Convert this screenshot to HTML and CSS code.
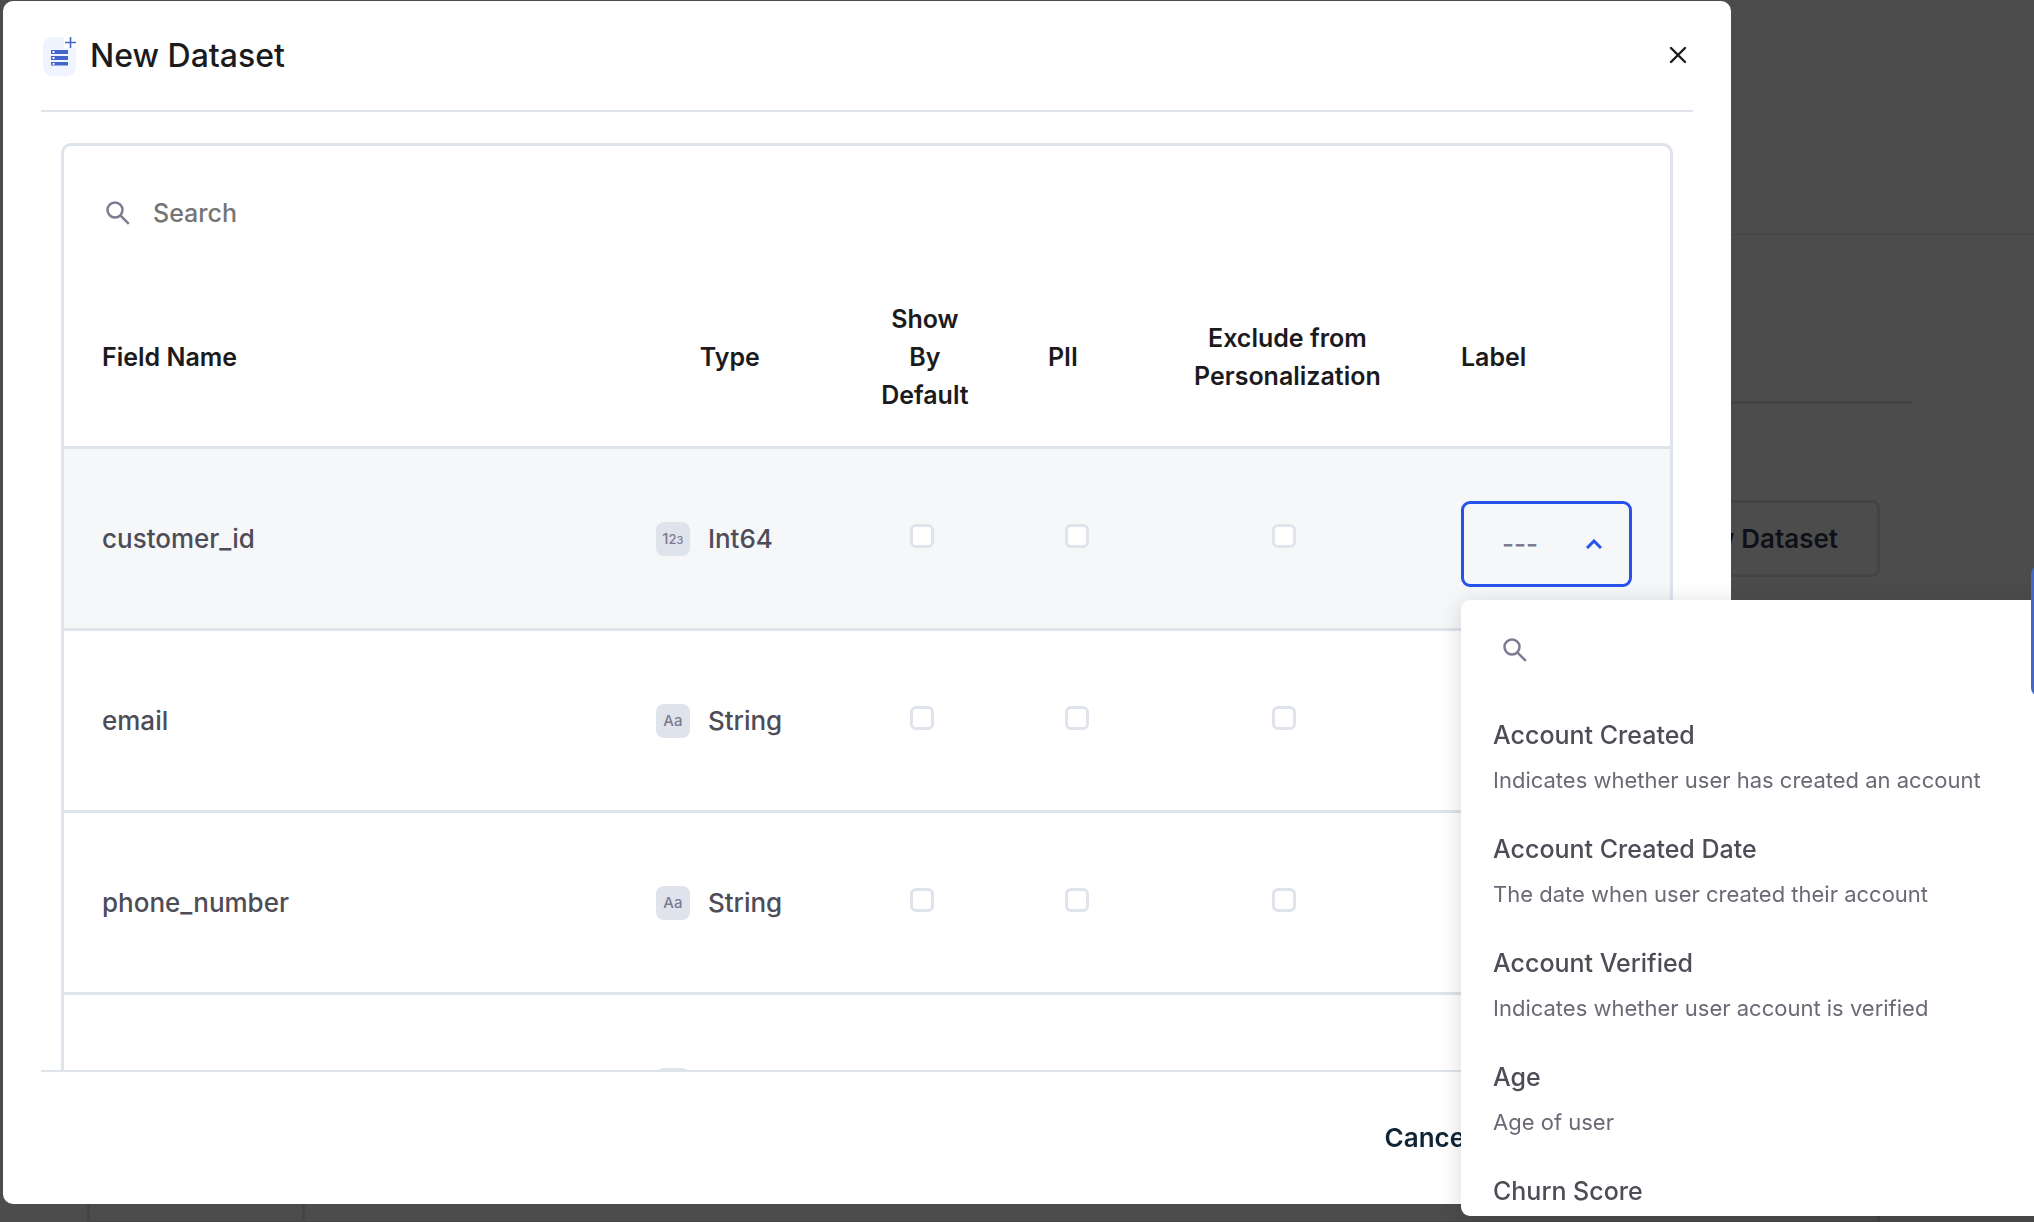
FILE: index.html
```html
<!DOCTYPE html>
<html lang="en">
<head>
<meta charset="utf-8">
<title>New Dataset</title>
<link rel="stylesheet" href="styles.css">
</head>
<body>
<div class="page">
  <header class="page-header"></header>
  <div class="page-toolbar"></div>
  <div class="page-actions">
    <button class="page-button" type="button">New Dataset</button>
  </div>
  <div class="page-panel"><div class="page-panel-side"></div></div>
</div>

<div class="backdrop">
  <section class="dialog" role="dialog" aria-modal="true" aria-labelledby="dialog-title">
    <header class="dialog-header">
      <svg class="dialog-icon" viewBox="0 0 36 42" aria-hidden="true">
        <rect x="1" y="2" width="33" height="39" rx="9" fill="#f0f4ff"/>
        <path d="M22 0h14v13H22z" fill="#fff"/>
        <path d="M28.500 2v11M23 7.500h11" stroke="#4367c8" stroke-width="1.600"/>
        <path d="M9 15h17v4H9zM9 21h17v4H9zM9 27h17v3.500H9z" fill="#4367c8"/>
        <path d="M10.500 16h2v2h-2zM10.500 22h2v2h-2zM10.500 28h2v1.800h-2z" fill="#fff"/>
      </svg>
      <h1 class="dialog-title" id="dialog-title">New Dataset</h1>
      <button class="close-button" type="button" aria-label="Close">
        <svg viewBox="0 0 30 30" aria-hidden="true"><path d="M8 7l14 14M22 7L8 21" fill="none" stroke="#1b1b1d" stroke-width="2.400" stroke-linecap="round"/></svg>
      </button>
    </header>

    <div class="dialog-body">
      <div class="fields-card">
        <label class="search">
          <svg class="search-icon" viewBox="0 0 24 24" aria-hidden="true"><circle cx="9" cy="9" r="7.500"/><path d="M14.300 14.300l8.500 8.500"/></svg>
          <input class="search-input" type="text" placeholder="Search" aria-label="Search">
        </label>
        <table class="fields">
          <colgroup>
            <col><col class="col-type"><col class="col-show"><col class="col-pii"><col class="col-exclude"><col class="col-label">
          </colgroup>
          <thead>
            <tr>
              <th class="name" scope="col">Field Name</th>
              <th scope="col">Type</th>
              <th scope="col">Show<br>By<br>Default</th>
              <th class="pii" scope="col">PII</th>
              <th scope="col">Exclude from<br>Personalization</th>
              <th class="label-head" scope="col">Label</th>
            </tr>
          </thead>
          <tbody>
            <tr class="active">
              <td class="name">customer_id</td>
              <td><div class="type"><span class="badge"><span>1</span><span class="digit-two">2</span><span class="digit-three">3</span></span>Int64</div></td>
              <td class="check"><input type="checkbox" aria-label="Show customer_id by default"></td>
              <td class="check"><input type="checkbox" aria-label="customer_id is PII"></td>
              <td class="check"><input type="checkbox" aria-label="Exclude customer_id from personalization"></td>
              <td class="label-cell">
                <div class="select-box">
                  <select class="select" aria-label="Label for customer_id"><option>---</option></select>
                  <svg class="chevron" viewBox="0 0 16 10" aria-hidden="true"><path d="M1 9l7-7 7 7"/></svg>
                </div>
              </td>
            </tr>
            <tr>
              <td class="name">email</td>
              <td><div class="type"><span class="badge">Aa</span>String</div></td>
              <td class="check"><input type="checkbox" aria-label="Show email by default"></td>
              <td class="check"><input type="checkbox" aria-label="email is PII"></td>
              <td class="check"><input type="checkbox" aria-label="Exclude email from personalization"></td>
              <td></td>
            </tr>
            <tr>
              <td class="name">phone_number</td>
              <td><div class="type"><span class="badge">Aa</span>String</div></td>
              <td class="check"><input type="checkbox" aria-label="Show phone_number by default"></td>
              <td class="check"><input type="checkbox" aria-label="phone_number is PII"></td>
              <td class="check"><input type="checkbox" aria-label="Exclude phone_number from personalization"></td>
              <td></td>
            </tr>
            <tr>
              <td class="name"></td>
              <td><div class="type"><span class="badge"></span></div></td>
              <td></td>
              <td></td>
              <td></td>
              <td></td>
            </tr>
          </tbody>
        </table>
      </div>
    </div>

    <footer class="dialog-footer">
      <button class="cancel-button" type="button">Cancel</button>
    </footer>
  </section>
</div>

<div class="menu">
  <label class="menu-search">
    <svg class="search-icon" viewBox="0 0 24 24" aria-hidden="true"><circle cx="9" cy="9" r="7.500"/><path d="M14.300 14.300l8.500 8.500"/></svg>
    <input class="search-input" type="text" aria-label="Search labels">
  </label>
  <ul class="menu-list">
    <li class="menu-item"><span class="item-title">Account Created</span><span class="item-text">Indicates whether user has created an account</span></li>
    <li class="menu-item"><span class="item-title">Account Created Date</span><span class="item-text">The date when user created their account</span></li>
    <li class="menu-item"><span class="item-title">Account Verified</span><span class="item-text">Indicates whether user account is verified</span></li>
    <li class="menu-item"><span class="item-title">Age</span><span class="item-text">Age of user</span></li>
    <li class="menu-item"><span class="item-title">Churn Score</span></li>
  </ul>
</div>

<button class="side-tab" type="button" aria-label="Help"></button>
</body>
</html>
```
FILE: styles.css
```css
:root {
  --line: #dfe3ec;
  --ink: #1b1b1d;
  --text: #4d4c57;
  --muted: #7d7a92;
  --blue: #2853eb;
}

* {
  box-sizing: border-box;
}

body {
  margin: 0;
  overflow: hidden;
  background: #fff;
  color: var(--text);
  font-family: Inter, "Liberation Sans", sans-serif;
  font-size: 26px;
  font-weight: 450;
  line-height: 38px;
}

button,
input,
select {
  font: inherit;
  color: inherit;
}

button {
  padding: 0;
  border: 0;
  background: none;
}

/* Page behind the dialog */

.page {
  display: flex;
  flex-direction: column;
  height: 100vh;
}

.page-header {
  height: 235px;
  border-bottom: 1px solid var(--line);
}

.page-toolbar {
  height: 169px;
  margin: 0 122px 0 88px;
  border-bottom: 3px solid var(--line);
}

.page-actions {
  display: flex;
  justify-content: flex-end;
  padding: 96px 154px 48px 88px;
}

.page-button {
  height: 77px;
  padding: 0 39px;
  border: 3px solid var(--line);
  border-radius: 8px;
  color: #363a50;
  font-weight: 600;
}

.page-panel {
  flex: 1;
  display: flex;
  margin: 0 154px 0 87px;
  border: 3px solid var(--line);
  border-bottom-width: 1px;
}

.page-panel-side {
  width: 215px;
  border-right: 3px solid var(--line);
}

/* Dialog */

.backdrop {
  position: fixed;
  inset: 0;
  display: flex;
  padding: 1px 3px 18px;
  background: rgba(0, 0, 0, 0.7);
}

.dialog {
  display: flex;
  flex-direction: column;
  width: calc(85vw - 1px);
  padding: 0 38px;
  border-radius: 10px;
  background: #fff;
}

.dialog-header {
  display: flex;
  align-items: center;
  flex: none;
  height: 111px;
  border-bottom: 2px solid var(--line);
}

.dialog-icon {
  width: 36px;
  height: 42px;
  margin-left: 1px;
}

.dialog-title {
  flex: 1;
  margin: 0 0 0 12px;
  color: var(--ink);
  font-size: 32px;
  font-weight: 550;
  line-height: 40px;
}

.close-button,
.close-button svg {
  display: block;
  width: 30px;
  height: 30px;
}

.dialog-body {
  flex: 1;
  min-height: 0;
  overflow: hidden;
  padding: 31px 20px 0;
}

.fields-card {
  border: 3px solid var(--line);
  border-radius: 10px;
  overflow: hidden;
}

.search {
  display: flex;
  align-items: center;
  gap: 23px;
  padding: 48px 42px 35px;
}

.search .search-input {
  font-size: 25px;
}

.search-icon {
  flex: none;
  width: 24px;
  height: 24px;
  fill: none;
  stroke: var(--muted);
  stroke-width: 2.5;
}

.search-input {
  flex: 1;
  min-width: 0;
  height: 38px;
  padding: 0;
  border: 0;
  outline: 0;
  background: none;
}

.search-input::placeholder {
  color: #757575;
  opacity: 1;
}

.fields {
  width: 100%;
  border-spacing: 0;
  table-layout: fixed;
}

.col-type { width: 148px; }
.col-show { width: 242px; }
.col-pii { width: 68px; }
.col-exclude { width: 347px; }
.col-label { width: 209px; }

.fields th,
.fields td {
  height: 182px;
  padding: 0;
  border-bottom: 3px solid var(--line);
  vertical-align: middle;
}

.fields th {
  color: var(--ink);
  font-size: 25px;
  font-weight: 600;
  text-align: center;
}

.fields .name {
  padding-left: 38px;
  text-align: left;
}

.fields .pii {
  padding-left: 2px;
  text-align: left;
}

.fields .label-head {
  text-align: left;
}

.active td {
  background: #f5f7f9;
}

.type {
  display: flex;
  align-items: center;
  gap: 18px;
}

.badge {
  display: flex;
  align-items: baseline;
  justify-content: center;
  flex: none;
  width: 34px;
  height: 34px;
  border-radius: 8px;
  background: var(--line);
  color: var(--muted);
  font-size: 15px;
  line-height: 34px;
}

.digit-two { font-size: 13px; }
.digit-three { font-size: 11px; }

.fields .check {
  padding: 0 6px 6px 0;
  text-align: center;
}

.check input {
  display: block;
  appearance: none;
  width: 24px;
  height: 24px;
  margin: 0 auto;
  border: 3px solid var(--line);
  border-radius: 6px;
  background: #fff;
}

.fields .label-cell {
  padding-top: 10px;
}

.select-box {
  display: grid;
  align-items: center;
  width: 171px;
}

.select {
  grid-area: 1 / 1;
  appearance: none;
  width: 100%;
  height: 86px;
  padding: 0 38px;
  border: 3px solid var(--blue);
  border-radius: 9px;
  outline: 0;
  background: none;
  color: var(--muted);
}

.chevron {
  grid-area: 1 / 1;
  justify-self: end;
  width: 16px;
  height: 10px;
  margin-right: 30px;
  fill: none;
  stroke: var(--blue);
  stroke-width: 3;
  pointer-events: none;
}

.dialog-footer {
  display: flex;
  align-items: center;
  justify-content: flex-end;
  flex: none;
  height: 134px;
  padding-right: 221px;
  border-top: 2px solid var(--line);
}

.cancel-button {
  color: #0f2536;
  font-weight: 600;
}

/* Label menu, opened below its select */

.menu {
  position: fixed;
  top: 600px;
  bottom: 6px;
  left: 1461px;
  width: 600px;
  overflow: hidden;
  border-radius: 9px;
  background: #fff;
  box-shadow: 0 4px 24px rgba(0, 0, 0, 0.15);
}

.menu-search {
  display: flex;
  align-items: center;
  gap: 24px;
  height: 100px;
  padding: 0 42px;
}

.menu-list {
  margin: 0;
  padding: 0;
  list-style: none;
}

.menu-item {
  display: flex;
  flex-direction: column;
  gap: 8px;
  padding: 16px 32px;
}

.item-title {
  font-size: 25px;
}

.item-text {
  color: #6a6a75;
  font-size: 22px;
  font-weight: 400;
  line-height: 36px;
}

.side-tab {
  position: fixed;
  top: 566px;
  right: -37px;
  width: 40px;
  height: 130px;
  border-radius: 8px;
  background: #4668c5;
}
```
